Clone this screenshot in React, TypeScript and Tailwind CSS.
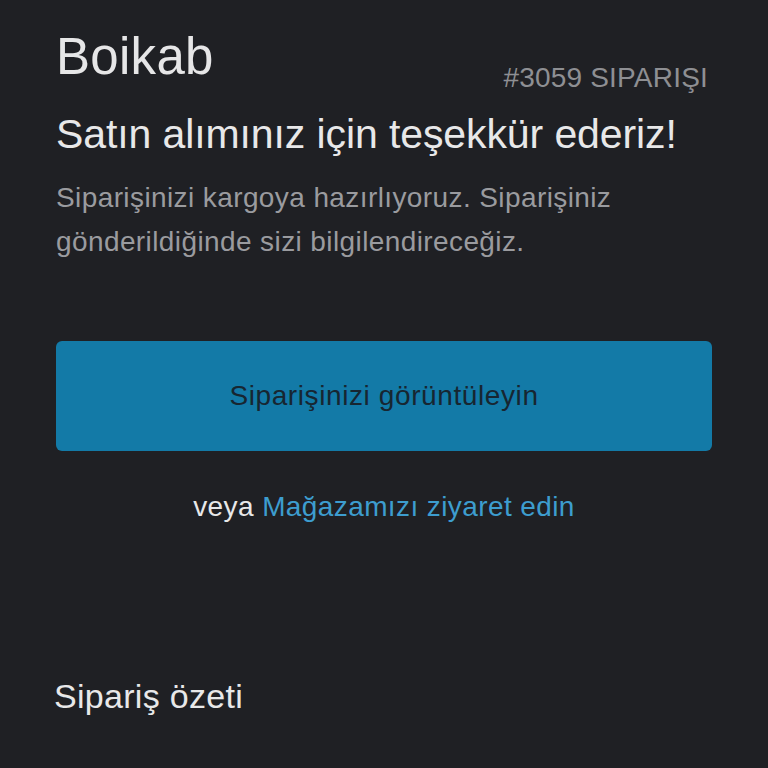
export default function App() {
  return (
    <div
      className="min-h-[768px] w-full bg-[#1f2024] px-14 pt-[28px] pb-10"
      style={{ fontFamily: '"Liberation Sans", Arial, sans-serif' }}
    >
      <div className="flex items-start justify-between">
        <div className="text-[51px] leading-[57px] text-[#e6e6e7] tracking-[0.3px]">Boikab</div>
        <div className="mt-[34px] mr-1 text-[28px] leading-[32px] text-[#8e8f93] tracking-[0.2px]">#3059 SIPARIŞI</div>
      </div>
      <h1 className="mt-4 text-[41px] leading-[48px] font-normal text-[#e8e8e9] tracking-[-0.1px]">
        Satın alımınız için teşekkür ederiz!
      </h1>
      <p className="mt-[18px] text-[28px] leading-[44px] text-[#9a9b9f] tracking-[0.4px]">
        Siparişinizi kargoya hazırlıyoruz. Siparişiniz gönderildiğinde sizi bilgilendireceğiz.
      </p>
      <div className="mt-[77px] flex h-[110px] items-center justify-center rounded-md bg-[#137aa7] text-[28px] text-[#172631] tracking-[0.6px]">
        Siparişinizi görüntüleyin
      </div>
      <div className="mt-10 text-center text-[28px] leading-[32px] tracking-[0.4px]">
        <span className="text-[#e8e8e9]">veya </span>
        <span className="text-[#3d9dcf]">Mağazamızı ziyaret edin</span>
      </div>
      <h2 className="mt-[153px] -ml-0.5 text-[34px] leading-[40px] font-normal text-[#e8e8e9] tracking-[0.3px]">
        Sipariş özeti
      </h2>
    </div>
  );
}
